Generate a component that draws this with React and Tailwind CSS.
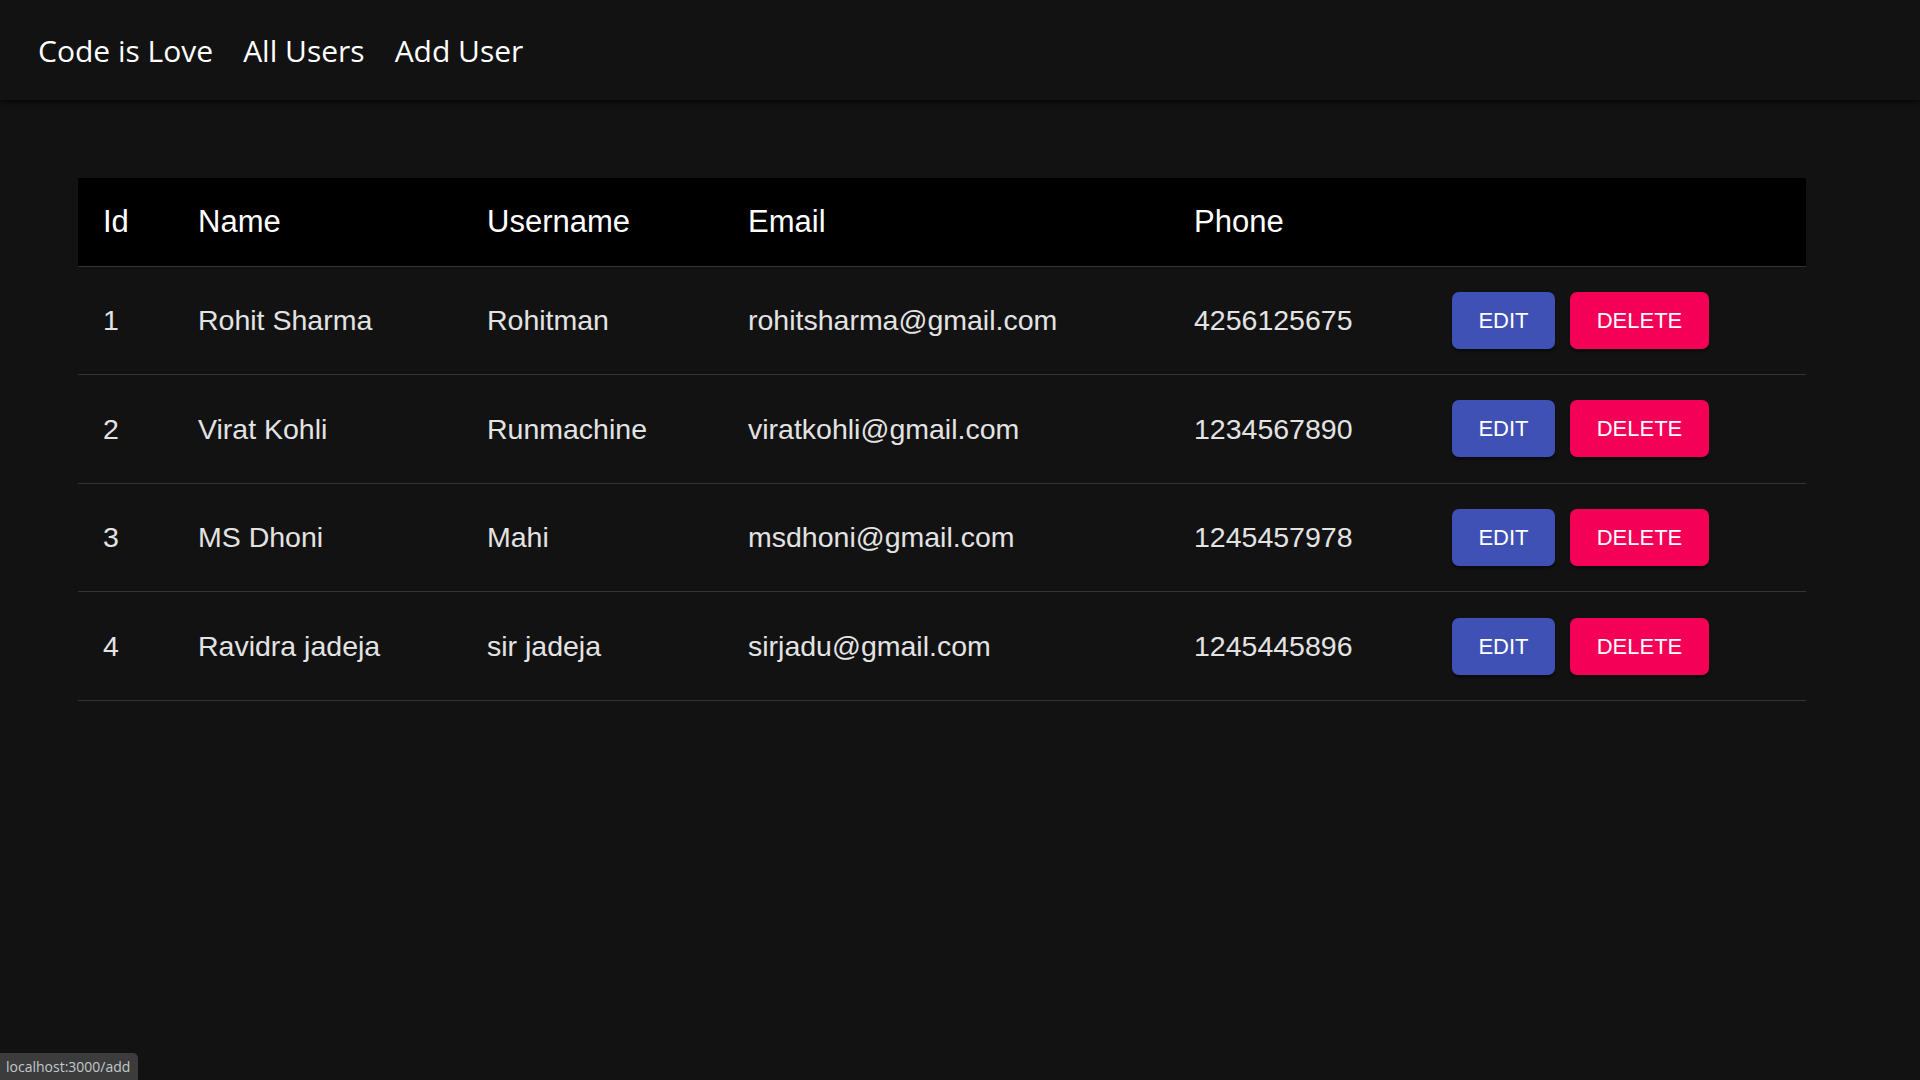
import React from 'react';

const users = [
  { id: 1, name: 'Rohit Sharma', username: 'Rohitman', email: 'rohitsharma@gmail.com', phone: '4256125675' },
  { id: 2, name: 'Virat Kohli', username: 'Runmachine', email: 'viratkohli@gmail.com', phone: '1234567890' },
  { id: 3, name: 'MS Dhoni', username: 'Mahi', email: 'msdhoni@gmail.com', phone: '1245457978' },
  { id: 4, name: 'Ravidra jadeja', username: 'sir jadeja', email: 'sirjadu@gmail.com', phone: '1245445896' },
];

const Navbar = () => (
  <header className="h-[100px] bg-[#121212] shadow-[0_2px_6px_rgba(0,0,0,0.7)] relative z-10 flex items-center px-[38px] gap-[30px] text-white text-[30px] font-['Open_Sans',sans-serif]">
    <a>Code is Love</a>
    <a>All Users</a>
    <a>Add User</a>
  </header>
);

const AllUsers = () => {
  return (
    <div className="w-[1728px] ml-[78px] mt-[78px]">
      <table className="w-full table-fixed border-collapse font-['Liberation_Sans',Arial,sans-serif]">
        <colgroup>
          <col className="w-[92px]" />
          <col className="w-[289px]" />
          <col className="w-[261px]" />
          <col className="w-[446px]" />
          <col className="w-[258px]" />
          <col />
        </colgroup>
        <thead>
          <tr className="bg-black text-white text-[31px] text-left border-b border-[#333]">
            <th className="h-[88px] pl-[25px] font-normal">Id</th>
            <th className="pl-[28px] font-normal">Name</th>
            <th className="pl-[28px] font-normal">Username</th>
            <th className="pl-[28px] font-normal">Email</th>
            <th className="pl-[28px] font-normal">Phone</th>
            <th></th>
          </tr>
        </thead>
        <tbody>
          {users.map((user) => (
            <tr key={user.id} className="text-[#e3e3e3] text-[28.5px] border-b border-[#333]">
              <td className="h-[108.6px] pl-[25px]">{user.id}</td>
              <td className="pl-[28px]">{user.name}</td>
              <td className="pl-[28px]">{user.username}</td>
              <td className="pl-[28px]">{user.email}</td>
              <td className="pl-[28px]">{user.phone}</td>
              <td className="pl-[28px]">
                <div className="flex gap-[15px]">
                  <button className="w-[103px] h-[57px] rounded-[7px] bg-[#3f51b5] text-white text-[22px] uppercase shadow-[0_3px_2px_rgba(0,0,0,0.35)]">
                    Edit
                  </button>
                  <button className="w-[139px] h-[57px] rounded-[7px] bg-[#f50057] text-white text-[22px] uppercase shadow-[0_3px_2px_rgba(0,0,0,0.35)]">
                    Delete
                  </button>
                </div>
              </td>
            </tr>
          ))}
        </tbody>
      </table>
    </div>
  );
};

export default function App() {
  return (
    <div className="min-h-screen bg-[#121212]">
      <Navbar />
      <AllUsers />
      {/* browser status bar */}
      <div className="fixed left-0 bottom-0 h-[27px] w-[138px] bg-[#3c3c3c] rounded-tr-[5px] pl-[6px] flex items-center text-[14px] text-[#c2c8cc] font-['Open_Sans',sans-serif]">
        localhost:3000/add
      </div>
    </div>
  );
}
